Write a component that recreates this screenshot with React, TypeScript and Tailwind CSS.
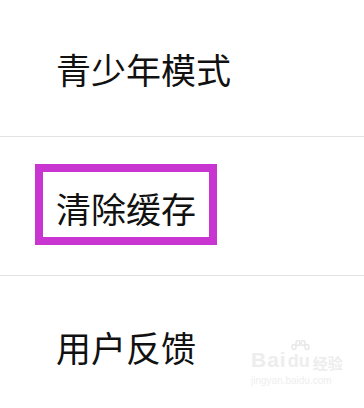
import React from "react";

const font = { fontFamily: '"Noto Sans CJK SC", "Noto Sans", sans-serif' };

function Row({ label, highlighted, className }: { label: string; highlighted?: boolean; className?: string }) {
  return (
    <div className={`flex items-center ${className ?? ""}`}>
      {highlighted ? (
        <div className="ml-[35px] border-[8px] border-[#c935d0] px-[13px] pt-[18px] pb-[12px] mt-[-4px]">
          <span className="block text-[35px] leading-[35px] text-[#111]">{label}</span>
        </div>
      ) : (
        <span className="ml-[56px] text-[35px] leading-[35px] text-[#111]">{label}</span>
      )}
    </div>
  );
}

export default function App() {
  return (
    <div className="relative w-[364px] h-[408px] bg-white overflow-hidden" style={font}>
      <Row label="青少年模式" className="h-[137px] border-b border-[#e3e3e3]" />
      <Row label="清除缓存" highlighted className="h-[139px] border-b border-[#e3e3e3]" />
      <Row label="用户反馈" className="h-[131px] pt-[10px]" />

      {/* watermark */}
      <div className="absolute left-[251px] top-[349px] flex flex-col items-start text-[#ededed] select-none">
        <div className="flex items-end leading-none">
          <span className="text-[21px] font-bold tracking-[1px]" style={{ fontFamily: '"Liberation Sans", sans-serif' }}>
            Bai
          </span>
          <span className="relative text-[18px] font-bold ml-[1px]" style={{ fontFamily: '"Liberation Sans", sans-serif' }}>
            <svg className="absolute left-[2px] top-[-12px]" width="20" height="13" viewBox="0 0 20 13" fill="none" stroke="#e8e8e8" strokeWidth="1.5">
              <ellipse cx="4" cy="7" rx="2" ry="2.5" />
              <ellipse cx="8" cy="3" rx="2" ry="2.5" />
              <ellipse cx="13" cy="3" rx="2" ry="2.5" />
              <ellipse cx="17" cy="7" rx="2" ry="2.5" />
            </svg>
            du
          </span>
          <span className="text-[15px] font-bold ml-[3px]">经验</span>
        </div>
        <span className="text-[10px] mt-[3px] text-[#eeeeee]" style={{ fontFamily: '"Liberation Sans", sans-serif' }}>
          jingyan.baidu.com
        </span>
      </div>
    </div>
  );
}
